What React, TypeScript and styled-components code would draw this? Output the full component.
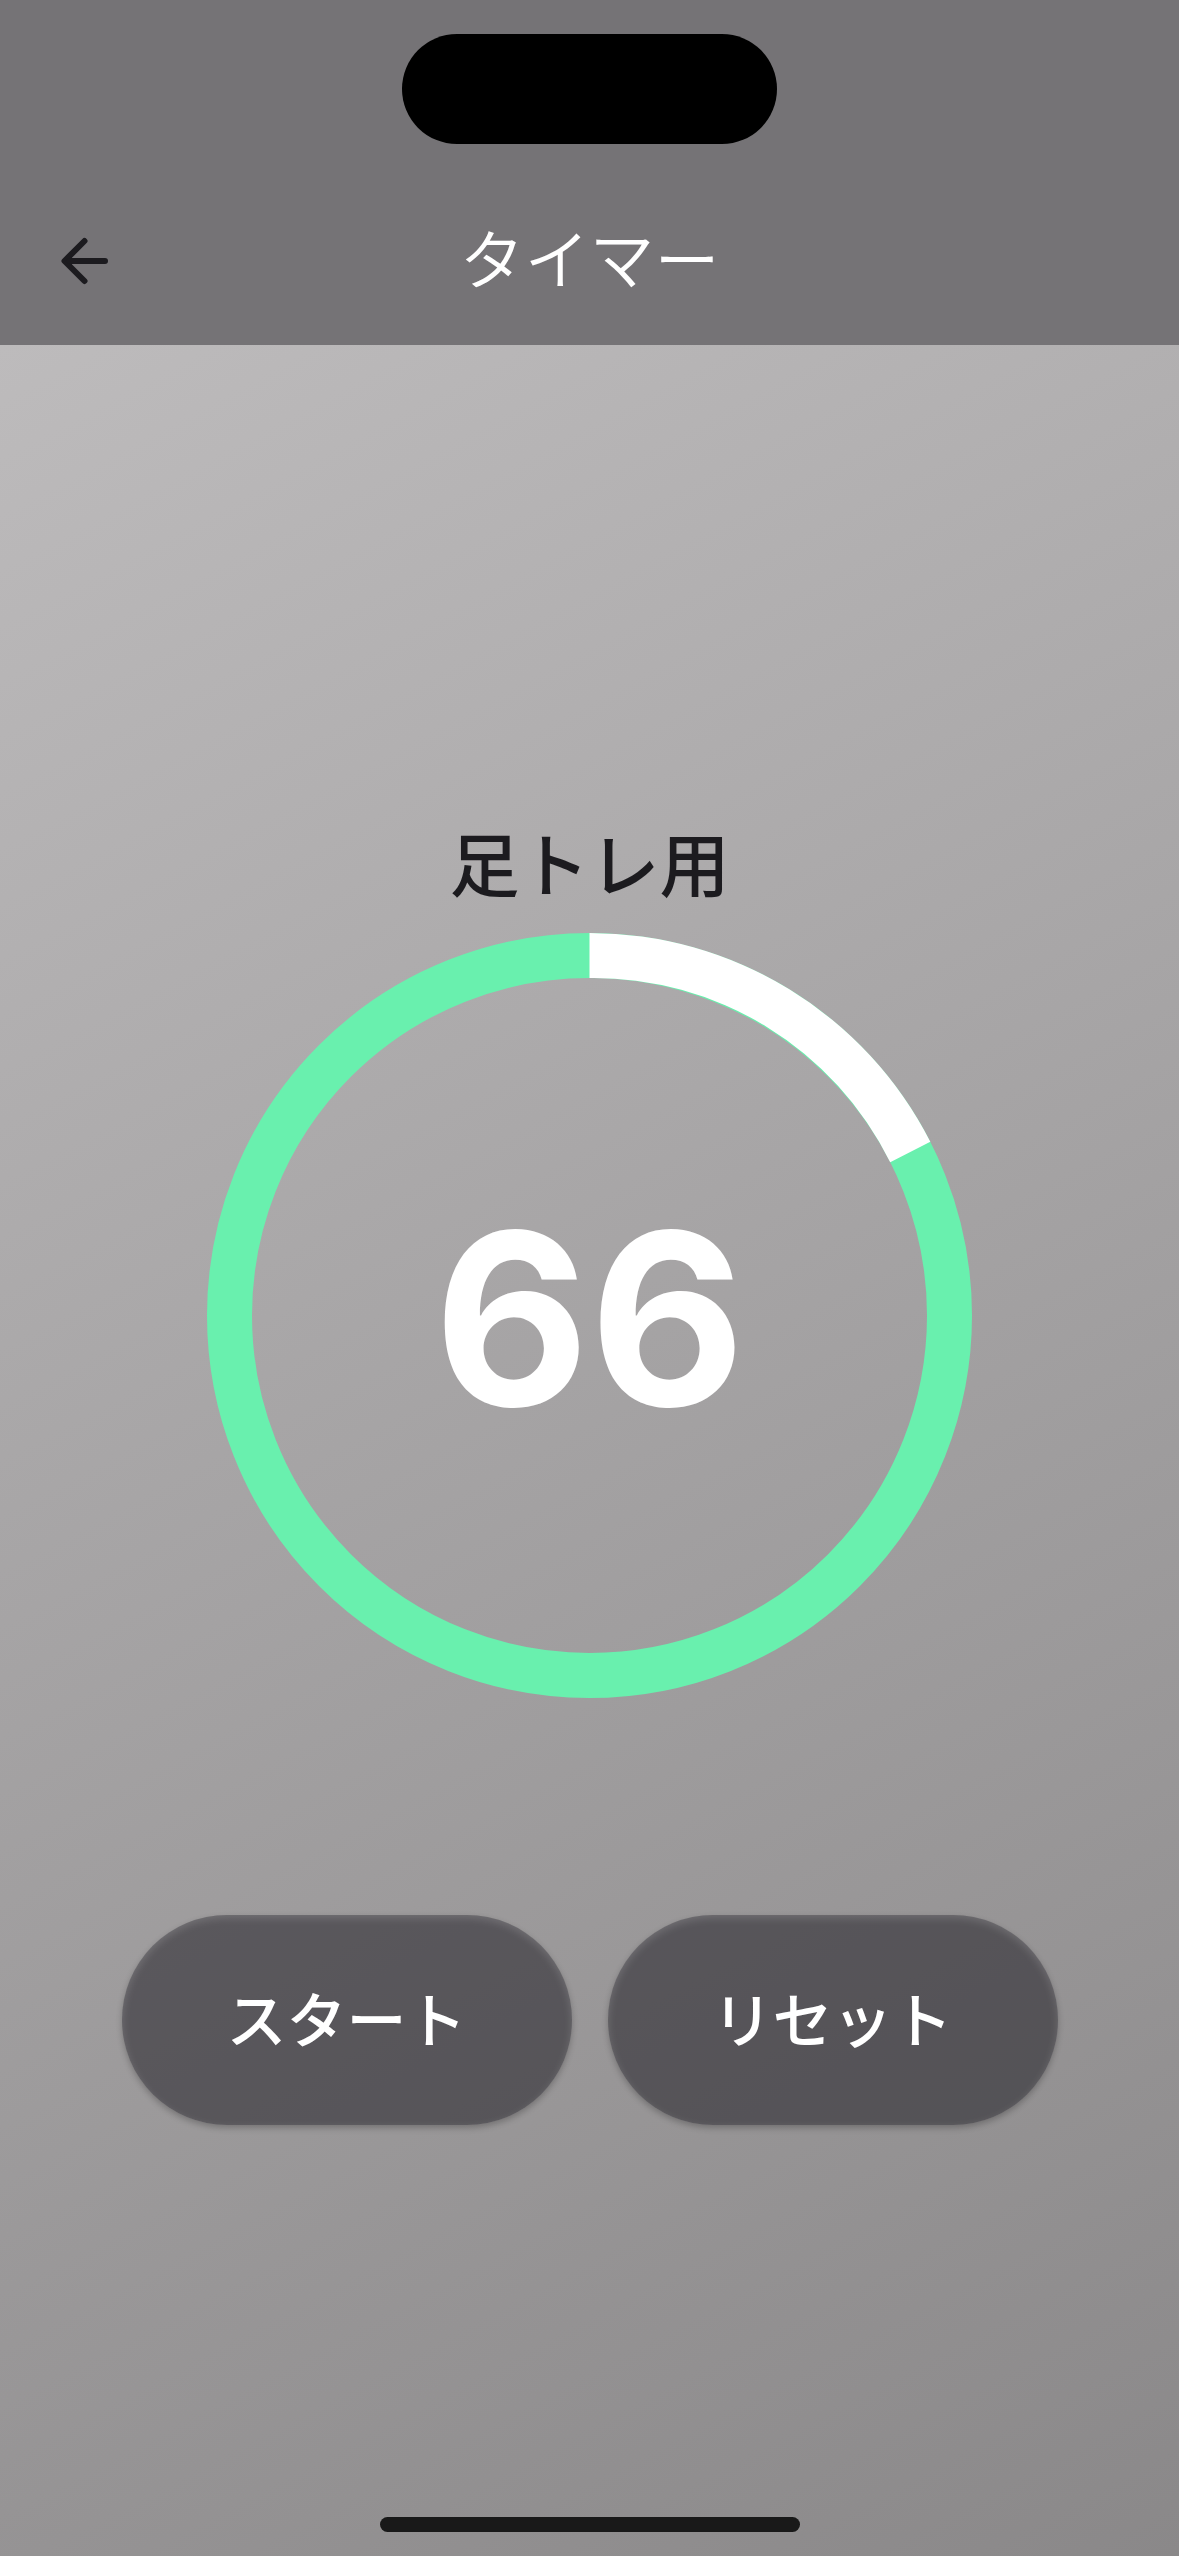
import React, { useEffect, useState } from "react";
import styled, { createGlobalStyle } from "styled-components";

const TOTAL_SECONDS = 80;
const START_SECONDS = 66;

const GlobalStyle = createGlobalStyle`
  *, *::before, *::after { box-sizing: border-box; }
  body {
    margin: 0;
    font-family: "Noto Sans CJK JP", "Noto Sans", sans-serif;
  }
`;

const Screen = styled.div`
  display: flex;
  flex-direction: column;
  min-height: 100vh;
  background: #757376;
`;

const StatusBar = styled.div`
  display: flex;
  justify-content: center;
  height: 177px;
  padding-top: 34px;
`;

const Island = styled.div`
  width: 375px;
  height: 110px;
  border-radius: 55px;
  background: #000;
`;

const AppBar = styled.header`
  display: grid;
  grid-template-columns: 168px 1fr 168px;
  align-items: center;
  height: 168px;
`;

const BackButton = styled.button`
  display: flex;
  align-items: center;
  justify-content: center;
  width: 144px;
  height: 144px;
  margin-left: 12px;
  padding: 0;
  border: 0;
  border-radius: 50%;
  background: transparent;
  color: #1c1b1f;
  cursor: pointer;
`;

const Title = styled.h1`
  margin: 0;
  padding-bottom: 10px;
  color: #fff;
  font-family: "Noto Sans CJK JP DemiLight", "Noto Sans CJK JP", sans-serif;
  font-size: 65px;
  font-weight: 350;
  line-height: 84px;
  text-align: center;
`;

const Main = styled.main`
  display: flex;
  flex: 1;
  flex-direction: column;
  align-items: center;
  justify-content: center;
  padding: 38px 24px 0;
  background: linear-gradient(152deg, #bdbbbc, #8a8889);
`;

const Label = styled.h2`
  margin: 0 0 23px;
  color: #1c1b1f;
  font-size: 70px;
  font-weight: 500;
  line-height: 96px;
`;

const Dial = styled.div`
  display: grid;
  place-items: center;
  width: 765px;
  max-width: 100%;

  > * {
    grid-area: 1 / 1;
  }
`;

const Ring = styled.svg`
  display: block;
  width: 100%;
`;

const Count = styled.output`
  padding-top: 6px;
  color: #fff;
  font-family: Inter, "Liberation Sans", sans-serif;
  font-size: 240px;
  font-weight: 700;
  line-height: 288px;
`;

const Actions = styled.div`
  display: flex;
  flex-wrap: wrap;
  justify-content: center;
  gap: 36px;
  margin-top: 217px;
`;

const ActionButton = styled.button`
  width: 450px;
  height: 210px;
  padding: 0 0 6px;
  border: 0;
  border-radius: 105px;
  background: rgba(28, 27, 34, 0.53);
  box-shadow:
    0 3px 6px rgba(0, 0, 0, 0.24),
    inset 0 3px 9px rgba(255, 255, 255, 0.16);
  color: #fff;
  font-family: inherit;
  font-size: 60px;
  font-weight: 500;
  line-height: 84px;
  cursor: pointer;
`;

const HomeIndicator = styled.div`
  position: fixed;
  bottom: 24px;
  left: 50%;
  width: 420px;
  height: 15px;
  margin-left: -210px;
  border-radius: 8px;
  background: #191919;
`;

const OUTER = 382.5;
const INNER = 337.5;

function elapsedPath(fraction: number) {
  const angle = fraction * 2 * Math.PI;
  const point = (r: number) =>
    `${OUTER + r * Math.sin(angle)} ${OUTER - r * Math.cos(angle)}`;
  const large = fraction > 0.5 ? 1 : 0;
  // The inner edge bows out a little, leaving a hairline of the track.
  const bow = large ? INNER : INNER - 7;
  return [
    `M ${OUTER} 0`,
    `A ${OUTER} ${OUTER} 0 ${large} 1 ${point(OUTER)}`,
    `L ${point(INNER)}`,
    `A ${bow} ${bow} 0 ${large} 0 ${OUTER} ${OUTER - INNER}`,
    "Z",
  ].join(" ");
}

function ArrowBack() {
  return (
    <svg
      width="72"
      height="72"
      viewBox="0 0 72 72"
      fill="none"
      stroke="currentColor"
      strokeWidth="6"
      strokeLinecap="round"
      strokeLinejoin="round"
      aria-hidden="true"
    >
      <path d="M57 36H18M36.500 16L16.500 36L36.500 56" />
      <path d="M17 36L24 31V41Z" fill="currentColor" stroke="none" />
    </svg>
  );
}

export default function App() {
  const [seconds, setSeconds] = useState(START_SECONDS);
  const [running, setRunning] = useState(false);

  useEffect(() => {
    if (!running) return;
    const id = setInterval(() => setSeconds((s) => Math.max(0, s - 1)), 1000);
    return () => clearInterval(id);
  }, [running]);

  const reset = () => {
    setRunning(false);
    setSeconds(TOTAL_SECONDS);
  };

  return (
    <>
      <GlobalStyle />
      <Screen>
        <StatusBar>
          <Island />
        </StatusBar>
        <AppBar>
          <BackButton type="button" aria-label="戻る">
            <ArrowBack />
          </BackButton>
          <Title>タイマー</Title>
        </AppBar>
        <Main>
          <Label>足トレ用</Label>
          <Dial>
            <Ring viewBox="0 0 765 765" aria-hidden="true">
              <circle cx="382.5" cy="382.5" r="360" fill="none" stroke="#69f0ae" strokeWidth="45" />
              <path d={elapsedPath(1 - seconds / TOTAL_SECONDS)} fill="#fff" />
            </Ring>
            <Count>{seconds}</Count>
          </Dial>
          <Actions>
            <ActionButton type="button" onClick={() => setRunning(true)}>
              スタート
            </ActionButton>
            <ActionButton type="button" onClick={reset}>
              リセット
            </ActionButton>
          </Actions>
        </Main>
        <HomeIndicator />
      </Screen>
    </>
  );
}
